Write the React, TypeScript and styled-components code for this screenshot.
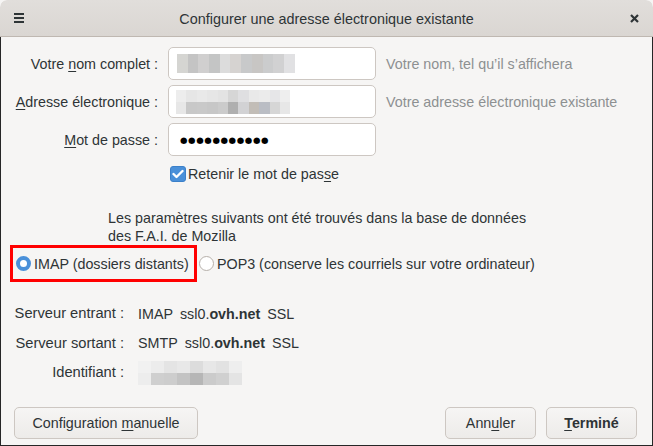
import React from "react";
import styled, { createGlobalStyle } from "styled-components";

const Global = createGlobalStyle`
  html, body { margin: 0; padding: 0; background: #f6f5f4; }
  body { font-family: "Liberation Sans", Arial, sans-serif; font-size: 14.3px; color: #2e3436; }
  * { box-sizing: border-box; }
`;

const Window = styled.div`
  width: 653px;
  height: 446px;
  display: flex;
  flex-direction: column;
  background: #f6f5f4;
  border-radius: 7px 7px 0 0;
  overflow: hidden;
`;

const TitleBar = styled.div`
  height: 37px;
  flex: none;
  display: grid;
  grid-template-columns: 40px 1fr 40px;
  align-items: center;
  background: linear-gradient(#e1dedb, #dad6d2);
  border-bottom: 1px solid #bfb8b1;
  border-radius: 7px 7px 0 0;
`;

const TitleText = styled.div`
  text-align: center;
  font-size: 14.4px;
  color: #2e3436;
  padding-top: 1px;
`;

const IconCell = styled.div<{ $align: string }>`
  display: flex;
  justify-content: ${(p) => p.$align};
  align-items: center;
  padding: 0 14px;
  height: 100%;
`;

const Body = styled.div`
  flex: 1;
  display: flex;
  flex-direction: column;
  border: 1px solid #262626;
  border-top: none;
  padding: 10px 0 6px 0;
`;

const FormGrid = styled.div`
  display: grid;
  grid-template-columns: 157px 208px auto;
  column-gap: 10px;
  row-gap: 5px;
  align-items: center;
`;

const Label = styled.div`
  text-align: right;
  white-space: nowrap;
`;

const Input = styled.div`
  height: 33px;
  background: #ffffff;
  border: 1px solid #cdc7c2;
  border-radius: 5px;
  display: flex;
  align-items: center;
  padding-left: 8px;
`;

const Hint = styled.div`
  color: #8d9091;
  white-space: nowrap;
`;

const Dots = styled.span`
  font-family: "DejaVu Sans", sans-serif;
  font-size: 8.6px;
  letter-spacing: 0.6px;
  color: #000;
  padding-left: 3px;
`;

const Blur = styled.div<{ $cols: number; $cell: number; $rows: number }>`
  display: grid;
  grid-template-columns: repeat(${(p) => p.$cols}, ${(p) => p.$cell}px);
  grid-auto-rows: ${(p) => (p.$rows === 1 ? 19 : 12)}px;
`;

const BlurCell = styled.div<{ $c: string }>`
  background: ${(p) => p.$c};
`;

const CheckRow = styled.label`
  grid-column: 2 / 4;
  display: flex;
  align-items: center;
  gap: 2px;
  padding-left: 2px;
  margin-top: 5px;
`;

const CheckBox = styled.span`
  width: 16px;
  height: 16px;
  border-radius: 3px;
  background: #4a90d9;
  border: 1px solid #3b80c9;
  display: inline-flex;
  align-items: center;
  justify-content: center;
`;

const Info = styled.div`
  margin: 27px 0 0 107px;
  line-height: 18px;
`;

const RadioRow = styled.div`
  display: flex;
  align-items: center;
  padding-left: 9px;
`;

const Highlight = styled.div`
  border: 3px solid #ff0000;
  height: 37px;
  width: 187px;
  display: flex;
  align-items: center;
  padding-left: 3px;
`;

const RadioOption = styled.label<{ $shift?: number }>`
  display: flex;
  align-items: center;
  gap: 3px;
  white-space: nowrap;
  margin-left: ${(p) => p.$shift ?? 0}px;
`;

const Radio = styled.span<{ $on?: boolean }>`
  width: 15px;
  height: 15px;
  border-radius: 50%;
  background: #ffffff;
  border: ${(p) => (p.$on ? "4px solid #4a90d9" : "1px solid #b6b0aa")};
  flex: none;
`;

const ServerGrid = styled.div`
  display: grid;
  grid-template-columns: 123px auto;
  column-gap: 14px;
  margin-top: 17px;
  align-items: center;
`;

const ServerLabel = styled.div`
  text-align: right;
  height: 29.5px;
  line-height: 29.5px;
  white-space: nowrap;
  font-size: 14.7px;
`;

const ServerValue = styled.div`
  display: flex;
  gap: 7px;
  align-items: center;
  white-space: nowrap;
`;

const Spacer = styled.div`
  flex: 1;
`;

const ButtonBar = styled.div`
  display: flex;
  align-items: center;
  padding: 0 15px 0 13px;
  gap: 10px;
`;

const Button = styled.button<{ $w: number; $bold?: boolean }>`
  width: ${(p) => p.$w}px;
  height: 32px;
  border: 1px solid #cdc7c2;
  border-radius: 5px;
  background: linear-gradient(#f6f5f4, #edebe9);
  font-family: "Liberation Sans", Arial, sans-serif;
  font-size: 14.3px;
  font-weight: ${(p) => (p.$bold ? 700 : 400)};
  color: #2e3436;
  padding: 0;
  white-space: nowrap;
`;

const U = styled.span`
  text-decoration: underline;
  text-underline-offset: 2px;
`;

const nameShades = ["#d5d5d2", "#c4c4c4", "#d0cfcf", "#c4c5c5", "#dcdcdc", "#d6d3d1", "#c8c9ca", "#c8c6c4", "#cbcccd", "#d1d1d2", "#e1e1e3"];
const mailShades = [
  "#ededed", "#e6e6e6", "#e9e9e9", "#e6e6e6", "#e3e3e3", "#d6d6d6", "#dfdfe1", "#e9e9e9", "#ebebeb", "#e6e6e8", "#eeeeee",
  "#e7e7e7", "#c8c8c8", "#c9c9c9", "#c7c7c7", "#cbcbcb", "#afafaf", "#d2d2d4", "#c2bdb7", "#babdc4", "#d6d6d6", "#e7e7e7",
];
const idShades = [
  "#f1f1f1", "#ececec", "#e4e4e4", "#e8e8e8", "#dcdcdc", "#e7e7e7", "#e2e2e2", "#eeeeee",
  "#ededed", "#cfcfcf", "#cdcdcd", "#c3c3c3", "#b6b6b6", "#cbcbcb", "#d0d0d0", "#e4e4e4",
];

function Redacted({ shades, cols, cell, rows }: { shades: string[]; cols: number; cell: number; rows: number }) {
  return (
    <Blur $cols={cols} $cell={cell} $rows={rows}>
      {shades.map((c, i) => (
        <BlurCell key={i} $c={c} />
      ))}
    </Blur>
  );
}

export default function App() {
  return (
    <>
      <Global />
      <Window>
        <TitleBar>
          <IconCell $align="flex-start">
            <svg width="10" height="10" viewBox="0 0 10 10">
              <rect x="0" y="0" width="10" height="2" fill="#2e3436" />
              <rect x="0" y="4" width="10" height="2" fill="#2e3436" />
              <rect x="0" y="8" width="10" height="2" fill="#2e3436" />
            </svg>
          </IconCell>
          <TitleText>Configurer une adresse électronique existante</TitleText>
          <IconCell $align="flex-end">
            <svg width="9" height="9" viewBox="0 0 9 9">
              <path d="M1 1 L8 8 M8 1 L1 8" stroke="#2e3436" strokeWidth="2.2" />
            </svg>
          </IconCell>
        </TitleBar>
        <Body>
          <FormGrid>
            <Label>
              Votre <U>n</U>om complet :
            </Label>
            <Input>
              <Redacted shades={nameShades} cols={11} cell={10.7} rows={1} />
            </Input>
            <Hint>Votre nom, tel qu’il s’affichera</Hint>

            <Label>
              <U>A</U>dresse électronique :
            </Label>
            <Input style={{ paddingLeft: 7 }}>
              <Redacted shades={mailShades} cols={11} cell={10.4} rows={2} />
            </Input>
            <Hint>Votre adresse électronique existante</Hint>

            <Label>
              <U>M</U>ot de passe :
            </Label>
            <Input>
              <Dots>●●●●●●●●●●●</Dots>
            </Input>
            <div />

            <CheckRow>
              <CheckBox>
                <svg width="12" height="10" viewBox="0 0 12 10">
                  <path d="M1.5 5 L4.5 8 L10.5 2" stroke="#fff" strokeWidth="2.4" fill="none" strokeLinecap="round" strokeLinejoin="round" />
                </svg>
              </CheckBox>
              <span>
                Retenir le mot de pas<U>s</U>e
              </span>
            </CheckRow>
          </FormGrid>

          <Info>
            Les paramètres suivants ont été trouvés dans la base de données
            <br />
            des F.A.I. de Mozilla
          </Info>

          <RadioRow>
            <Highlight>
              <RadioOption>
                <Radio $on />
                IMAP (dossiers distants)
              </RadioOption>
            </Highlight>
            <RadioOption $shift={2}>
              <Radio />
              POP3 (conserve les courriels sur votre ordinateur)
            </RadioOption>
          </RadioRow>

          <ServerGrid>
            <ServerLabel>Serveur entrant :</ServerLabel>
            <ServerValue>
              <span>IMAP</span>
              <span>
                ssl0.<b>ovh.net</b>
              </span>
              <span>SSL</span>
            </ServerValue>
            <ServerLabel>Serveur sortant :</ServerLabel>
            <ServerValue>
              <span>SMTP</span>
              <span>
                ssl0.<b>ovh.net</b>
              </span>
              <span>SSL</span>
            </ServerValue>
            <ServerLabel>Identifiant :</ServerLabel>
            <ServerValue>
              <Redacted shades={idShades} cols={8} cell={13} rows={2} />
            </ServerValue>
          </ServerGrid>

          <Spacer />

          <ButtonBar>
            <Button $w={184}>
              Configuration <U>m</U>anuelle
            </Button>
            <Spacer />
            <Button $w={91}>
              Ann<U>u</U>ler
            </Button>
            <Button $w={91} $bold>
              <U>T</U>erminé
            </Button>
          </ButtonBar>
        </Body>
      </Window>
    </>
  );
}
